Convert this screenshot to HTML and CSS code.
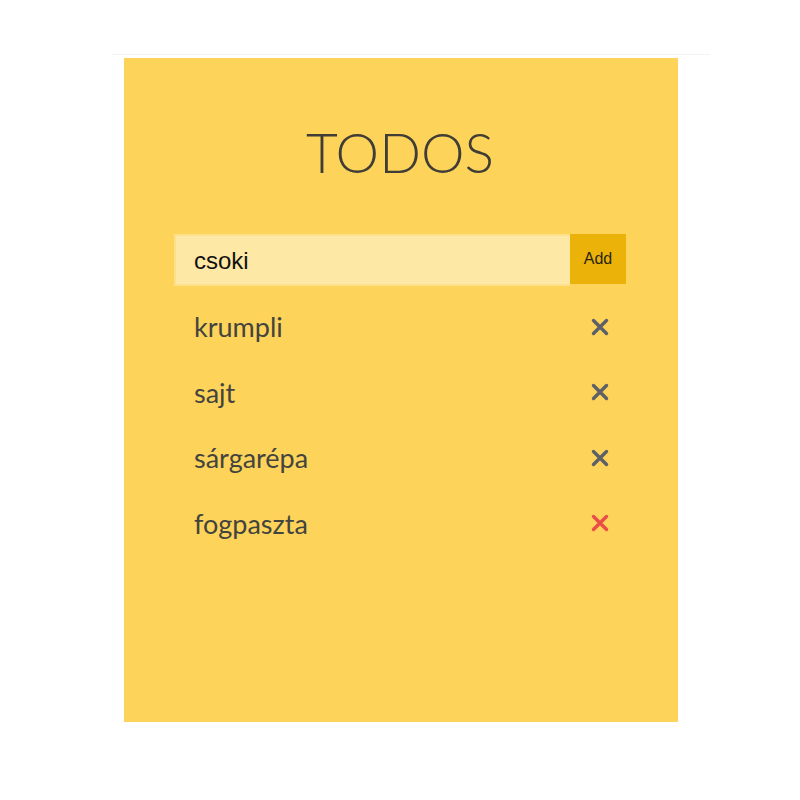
FILE: index.html
```html
<!DOCTYPE html>
<html>
<head>
<meta charset="utf-8">
<link rel="stylesheet" href="styles.css">
</head>
<body>
<div class="frame">
  <div class="panel">
    <h1 class="title">TODOS</h1>
    <form class="add-form">
      <input class="add-input" type="text" value="csoki">
      <button class="add-btn" type="button">Add</button>
    </form>
    <ul class="list">
      <li class="item"><span class="label">krumpli</span><svg class="del" viewBox="0 0 18 18"><path d="M2.5 2.5 L15.5 15.5 M15.5 2.5 L2.5 15.5"/></svg></li>
      <li class="item"><span class="label">sajt</span><svg class="del" viewBox="0 0 18 18"><path d="M2.5 2.5 L15.5 15.5 M15.5 2.5 L2.5 15.5"/></svg></li>
      <li class="item"><span class="label">sárgarépa</span><svg class="del" viewBox="0 0 18 18"><path d="M2.5 2.5 L15.5 15.5 M15.5 2.5 L2.5 15.5"/></svg></li>
      <li class="item"><span class="label">fogpaszta</span><svg class="del del-hover" viewBox="0 0 18 18"><path d="M2.5 2.5 L15.5 15.5 M15.5 2.5 L2.5 15.5"/></svg></li>
    </ul>
  </div>
</div>
</body>
</html>
```
FILE: styles.css
```css
html, body { margin: 0; padding: 0; background: #ffffff; }
body { padding-top: 54px; }
.frame {
  width: 598px;
  margin-left: 112px;
  border-top: 1px solid #f3f3f3;
  padding: 3px 0 0 12px;
  box-sizing: border-box;
}
.panel {
  width: 554px;
  height: 664px;
  background: #fdd35a;
  box-sizing: border-box;
  padding: 62px 52px 0 50px;
}
.title {
  margin: 0;
  text-align: center;
  font-family: "Lato", sans-serif;
  font-weight: 300;
  font-size: 55px;
  line-height: 64px;
  color: #3f3d36;
}
.add-form {
  display: flex;
  margin: 50px 0 0 0;
  height: 52px;
}
.add-input {
  flex: 1;
  min-width: 0;
  border: 2px solid #fde089;
  border-right: none;
  background: #fee8a6;
  font-family: "Liberation Sans", Arial, sans-serif;
  font-size: 24px;
  color: #111;
  padding: 2px 0 0 18px;
  outline: none;
  margin: 0;
}
.add-btn {
  width: 56px;
  border: none;
  background: #ebb20a;
  font-family: "Liberation Sans", Arial, sans-serif;
  font-size: 16px;
  color: #2a2410;
  margin: 0;
  padding: 0;
  height: 50px;
}
.list {
  list-style: none;
  margin: 8px 0 0 0;
  padding: 0;
}
.item {
  display: flex;
  justify-content: space-between;
  align-items: center;
  height: 65.5px;
  padding: 0 17px 0 20px;
}
.label {
  font-family: "Lato", sans-serif;
  font-size: 27px;
  color: #44443f;
}
.del {
  width: 18px;
  height: 18px;
  fill: none;
  stroke: #5d6066;
  stroke-width: 3.4;
  stroke-linecap: round;
}
.del-hover { stroke: #ea4d47; }
```
